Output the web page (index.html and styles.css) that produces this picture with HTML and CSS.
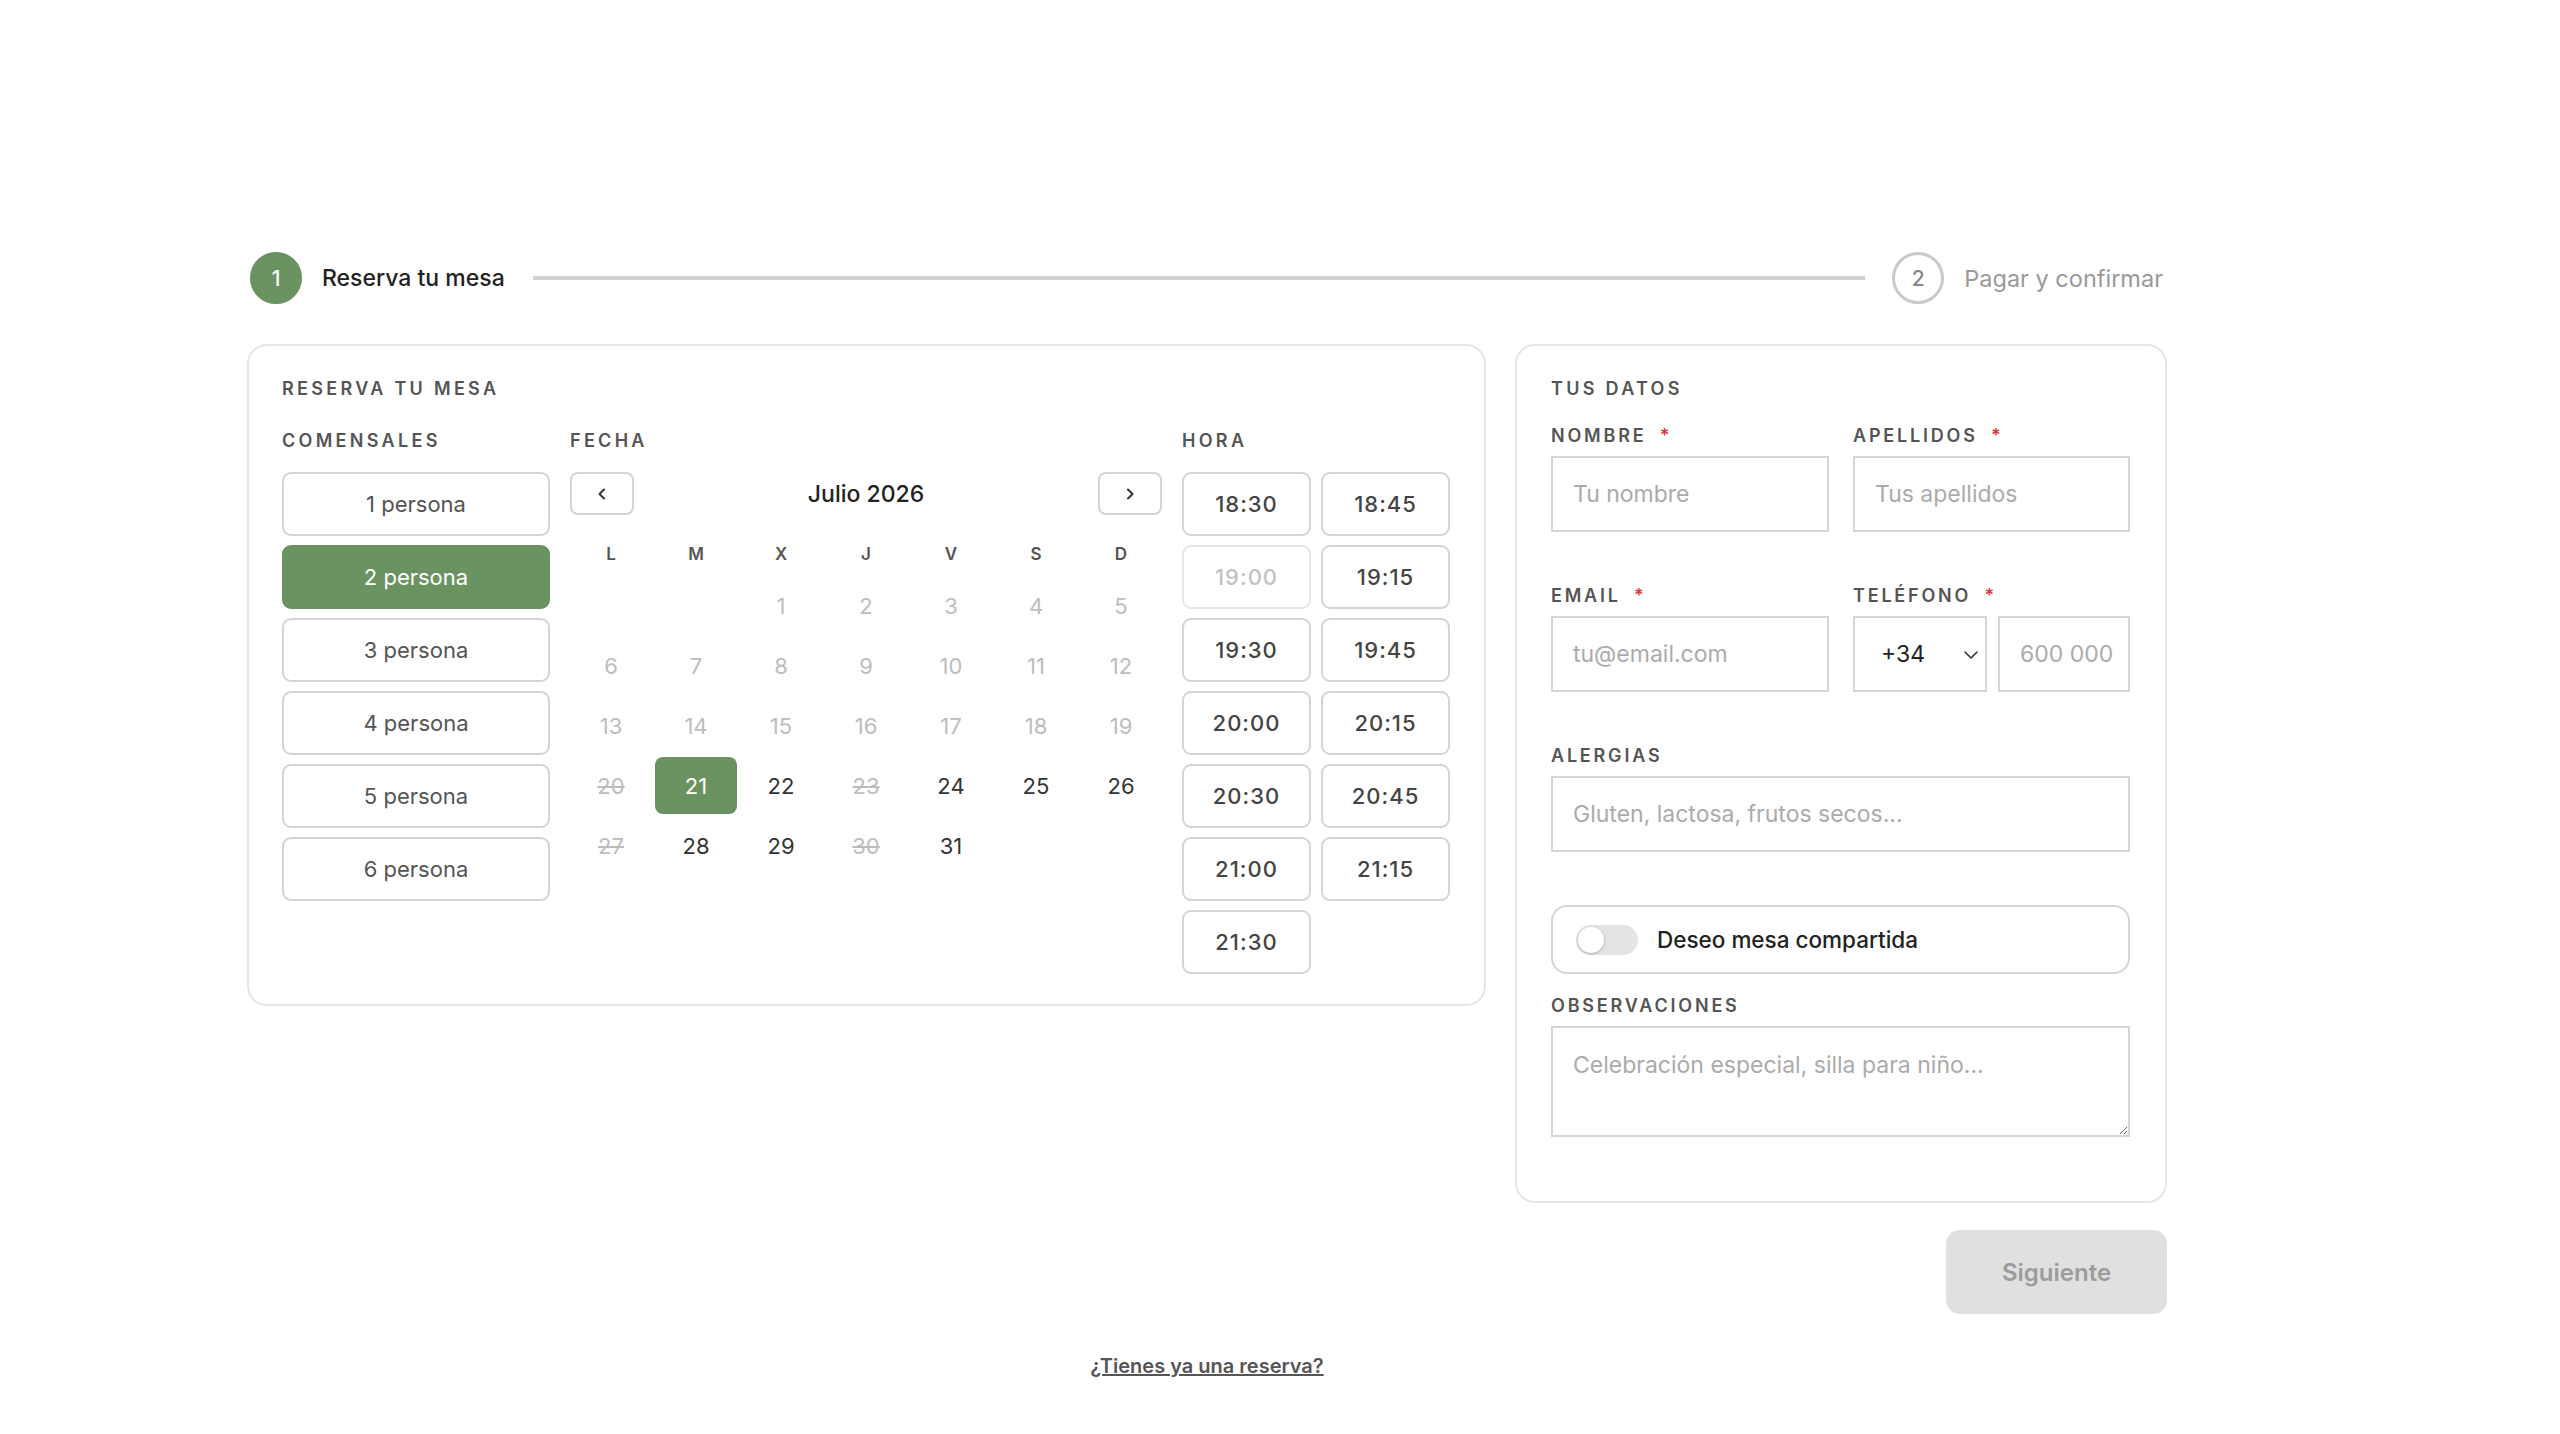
FILE: index.html
```html
<!DOCTYPE html>
<html lang="es">
<head>
  <meta charset="UTF-8" />
  <meta name="viewport" content="width=device-width, initial-scale=1.0"/>
  <title>Reserva tu mesa</title>
  <link rel="stylesheet" href="styles.css">
</head>
<body>
  <div class="page">
    <div class="stepper">
      <div class="step-num active">1</div>
      <div class="step-label active">Reserva tu mesa</div>
      <div class="step-line"></div>
      <div class="step-num">2</div>
      <div class="step-label">Pagar y confirmar</div>
    </div>

    <div class="layout">
      <div class="card card-main">
        <h3 class="section-title">Reserva tu mesa</h3>
        <div class="booking-grid">
          <div class="col">
            <div class="col-label">Comensales</div>
            <div class="guest-list">
              <button class="opt-btn">1 persona</button>
              <button class="opt-btn selected">2 persona</button>
              <button class="opt-btn">3 persona</button>
              <button class="opt-btn">4 persona</button>
              <button class="opt-btn">5 persona</button>
              <button class="opt-btn">6 persona</button>
            </div>
          </div>

          <div class="col">
            <div class="col-label">Fecha</div>
            <div class="cal-nav">
              <button class="nav-btn">
                <svg width="14" height="14" viewBox="0 0 14 14"><path d="M9 2.5 4.5 7 9 11.5" fill="none" stroke="#333" stroke-width="2" stroke-linecap="round" stroke-linejoin="round"/></svg>
              </button>
              <div class="cal-month">Julio 2026</div>
              <button class="nav-btn">
                <svg width="14" height="14" viewBox="0 0 14 14"><path d="M5 2.5 9.5 7 5 11.5" fill="none" stroke="#333" stroke-width="2" stroke-linecap="round" stroke-linejoin="round"/></svg>
              </button>
            </div>
            <div class="weekdays">
              <span>L</span><span>M</span><span>X</span><span>J</span><span>V</span><span>S</span><span>D</span>
            </div>
            <div class="days">
              <span></span><span></span>
              <span class="day past">1</span><span class="day past">2</span><span class="day past">3</span><span class="day past">4</span><span class="day past">5</span>
              <span class="day past">6</span><span class="day past">7</span><span class="day past">8</span><span class="day past">9</span><span class="day past">10</span><span class="day past">11</span><span class="day past">12</span>
              <span class="day past">13</span><span class="day past">14</span><span class="day past">15</span><span class="day past">16</span><span class="day past">17</span><span class="day past">18</span><span class="day past">19</span>
              <span class="day full">20</span><span class="day selected">21</span><span class="day">22</span><span class="day full">23</span><span class="day">24</span><span class="day">25</span><span class="day">26</span>
              <span class="day full">27</span><span class="day">28</span><span class="day">29</span><span class="day full">30</span><span class="day">31</span>
            </div>
          </div>

          <div class="col">
            <div class="col-label">Hora</div>
            <div class="time-grid">
              <button class="opt-btn time">18:30</button>
              <button class="opt-btn time">18:45</button>
              <button class="opt-btn time disabled">19:00</button>
              <button class="opt-btn time">19:15</button>
              <button class="opt-btn time">19:30</button>
              <button class="opt-btn time">19:45</button>
              <button class="opt-btn time">20:00</button>
              <button class="opt-btn time">20:15</button>
              <button class="opt-btn time">20:30</button>
              <button class="opt-btn time">20:45</button>
              <button class="opt-btn time">21:00</button>
              <button class="opt-btn time">21:15</button>
              <button class="opt-btn time">21:30</button>
            </div>
          </div>
        </div>
      </div>

      <div class="side">
        <div class="card card-side">
          <h3 class="section-title">Tus datos</h3>

          <div class="field-row two">
            <div class="field">
              <label for="nombre">Nombre <span class="req">*</span></label>
              <input type="text" id="nombre" placeholder="Tu nombre" />
            </div>
            <div class="field">
              <label for="apellidos">Apellidos <span class="req">*</span></label>
              <input type="text" id="apellidos" placeholder="Tus apellidos" />
            </div>
          </div>

          <div class="field-row two">
            <div class="field">
              <label for="email">Email <span class="req">*</span></label>
              <input type="email" id="email" placeholder="tu@email.com" />
            </div>
            <div class="field">
              <label for="telefono">Teléfono <span class="req">*</span></label>
              <div class="phone-group">
                <div class="select-wrap">
                  <select id="prefijo">
                    <option>+34</option>
                  </select>
                  <svg class="select-arrow" width="16" height="10" viewBox="0 0 16 10"><path d="M2 2 8 8 14 2" fill="none" stroke="#333" stroke-width="1.6" stroke-linecap="round" stroke-linejoin="round"/></svg>
                </div>
                <input type="tel" id="telefono" placeholder="600 000 000" />
              </div>
            </div>
          </div>

          <div class="field-row">
            <div class="field">
              <label for="alergias">Alergias</label>
              <input type="text" id="alergias" placeholder="Gluten, lactosa, frutos secos..." />
            </div>
          </div>

          <div class="toggle-box">
            <span class="toggle"><span class="knob"></span></span>
            <span class="toggle-text">Deseo mesa compartida</span>
          </div>

          <div class="field">
            <label for="obs">Observaciones</label>
            <textarea id="obs" placeholder="Celebración especial, silla para niño..."></textarea>
          </div>
        </div>

        <div class="actions">
          <button class="next-btn" disabled>Siguiente</button>
        </div>
      </div>
    </div>

    <div class="bottom-link">
      <a href="#">¿Tienes ya una reserva?</a>
    </div>
  </div>
</body>
</html>
```

FILE: styles.css
```css
* {
  box-sizing: border-box;
  margin: 0;
  padding: 0;
}

body {
  background-color: #fff;
  font-family: "Inter", "Noto Sans", sans-serif;
  color: #222;
}

button,
input,
select,
textarea {
  font-family: inherit;
}

.page {
  width: 1920px;
  margin-left: 247px;
  padding-top: 252px;
  padding-bottom: 60px;
}

/* stepper */
.stepper {
  display: flex;
  align-items: center;
  height: 52px;
  padding: 0 4px 0 3px;
}

.step-num {
  width: 52px;
  height: 52px;
  border-radius: 50%;
  border: 3px solid #c9c9c9;
  display: flex;
  align-items: center;
  justify-content: center;
  font-size: 21px;
  font-weight: 500;
  color: #888;
  flex-shrink: 0;
}

.step-num.active {
  background-color: #6a9361;
  border-color: #6a9361;
  color: #fff;
}

.step-label {
  margin-left: 20px;
  font-size: 23.5px;
  color: #999;
}

.step-label.active {
  color: #222;
  font-size: 23px;
  font-weight: 500;
}

.step-line {
  flex: 1;
  height: 4px;
  background-color: #d2d2d2;
  margin: 0 27px 0 28px;
}

/* cards */
.layout {
  display: flex;
  align-items: flex-start;
  gap: 29px;
  margin-top: 40px;
}

.card {
  background-color: #fff;
  border: 2px solid #e6e6e6;
  border-radius: 20px;
}

.card-main {
  width: 1239px;
  padding: 32px 34px 30px 33px;
}

.side {
  width: 652px;
}

.card-side {
  padding: 32px 35px 60px 34px;
}

.section-title {
  font-size: 18px;
  line-height: 22px;
  font-weight: 600;
  letter-spacing: 3.3px;
  text-transform: uppercase;
  color: #555;
  margin-bottom: 30px;
}

.card-side .section-title {
  margin-bottom: 25px;
}

.booking-grid {
  display: grid;
  grid-template-columns: 268px 1fr 268px;
  column-gap: 20px;
}

.col-label {
  font-size: 18px;
  line-height: 22px;
  font-weight: 600;
  letter-spacing: 3.3px;
  text-transform: uppercase;
  color: #555;
  margin-bottom: 20px;
}

/* option buttons */
.guest-list {
  display: flex;
  flex-direction: column;
  gap: 9px;
}

.opt-btn {
  height: 64px;
  background-color: #fff;
  border: 2px solid #d4d4d4;
  border-radius: 9px;
  font-size: 22px;
  color: #555;
  cursor: pointer;
}

.opt-btn.selected {
  background-color: #6a9361;
  border-color: #6a9361;
  color: #fff;
}

.time-grid {
  display: grid;
  grid-template-columns: 1fr 1fr;
  gap: 9px 10px;
}

.opt-btn.time {
  font-weight: 500;
  letter-spacing: 1px;
  color: #444;
}

.opt-btn.time.disabled {
  color: #c2c2c2;
  border-color: #e6e6e6;
}

/* calendar */
.cal-nav {
  display: flex;
  align-items: center;
  justify-content: space-between;
  height: 43px;
}

.nav-btn {
  width: 64px;
  height: 43px;
  background-color: #fff;
  border: 2px solid #d4d4d4;
  border-radius: 8px;
  display: flex;
  align-items: center;
  justify-content: center;
  cursor: pointer;
}

.cal-month {
  font-size: 23px;
  font-weight: 500;
  color: #222;
}

.weekdays {
  display: grid;
  grid-template-columns: repeat(7, 1fr);
  column-gap: 3px;
  height: 30px;
  align-items: center;
  margin-top: 24px;
  text-align: center;
  font-size: 17px;
  font-weight: 600;
  color: #555;
}

.days {
  display: grid;
  grid-template-columns: repeat(7, 1fr);
  grid-auto-rows: 57px;
  gap: 3px;
  margin-top: 8px;
}

.day {
  display: flex;
  align-items: center;
  justify-content: center;
  font-size: 22px;
  color: #333;
  border-radius: 8px;
}

.day.past {
  color: #bdbdbd;
}

.day.full {
  color: #bdbdbd;
  text-decoration: line-through;
}

.day.selected {
  background-color: #6a9361;
  color: #fff;
}

/* form */
.field-row {
  margin-bottom: 53px;
}

.field-row.two {
  display: grid;
  grid-template-columns: 278px 1fr;
  column-gap: 24px;
}

.field label {
  display: block;
  font-size: 18px;
  line-height: 22px;
  font-weight: 600;
  letter-spacing: 2.8px;
  text-transform: uppercase;
  color: #555;
  margin-bottom: 9px;
}

.req {
  color: #d63a3a;
  margin-left: 6px;
}

.field input,
.field select,
.field textarea {
  width: 100%;
  height: 76px;
  border: 2px solid #d6d6d6;
  border-radius: 0;
  padding: 0 20px;
  font-size: 23px;
  color: #222;
  background-color: #fff;
  outline: none;
}

.field input::placeholder,
.field textarea::placeholder {
  color: #ababab;
}

.phone-group {
  display: flex;
  gap: 11px;
}

.select-wrap {
  position: relative;
  width: 134px;
  flex-shrink: 0;
}

.field select {
  appearance: none;
  padding-left: 26px;
}

.select-arrow {
  position: absolute;
  right: 8px;
  top: 34px;
  pointer-events: none;
}

.phone-group input {
  padding: 0 14px 0 20px;
}

.toggle-box {
  display: flex;
  align-items: center;
  height: 69px;
  border: 2px solid #d6d6d6;
  border-radius: 16px;
  padding: 0 23px;
  margin-bottom: 21px;
}

.toggle {
  width: 62px;
  height: 30px;
  border-radius: 15px;
  background-color: #e4e4e4;
  display: flex;
  align-items: center;
  padding: 2px;
}

.knob {
  width: 26px;
  height: 26px;
  border-radius: 50%;
  background-color: #fff;
  box-shadow: 0 1px 3px rgba(0,0,0,0.25);
}

.toggle-text {
  margin-left: 19px;
  font-size: 22.5px;
  font-weight: 500;
  color: #222;
}

.field textarea {
  height: 111px;
  padding: 23px 20px;
  resize: vertical;
}

/* actions */
.actions {
  display: flex;
  justify-content: flex-end;
  margin-top: 27px;
}

.next-btn {
  width: 221px;
  height: 84px;
  background-color: #e0e0e0;
  color: #9c9c9c;
  border: none;
  border-radius: 14px;
  font-size: 24px;
  font-weight: 600;
}

.bottom-link {
  text-align: center;
  margin-top: 40px;
}

.bottom-link a {
  font-size: 20px;
  font-weight: 600;
  color: #555;
  text-decoration: underline;
}
```
